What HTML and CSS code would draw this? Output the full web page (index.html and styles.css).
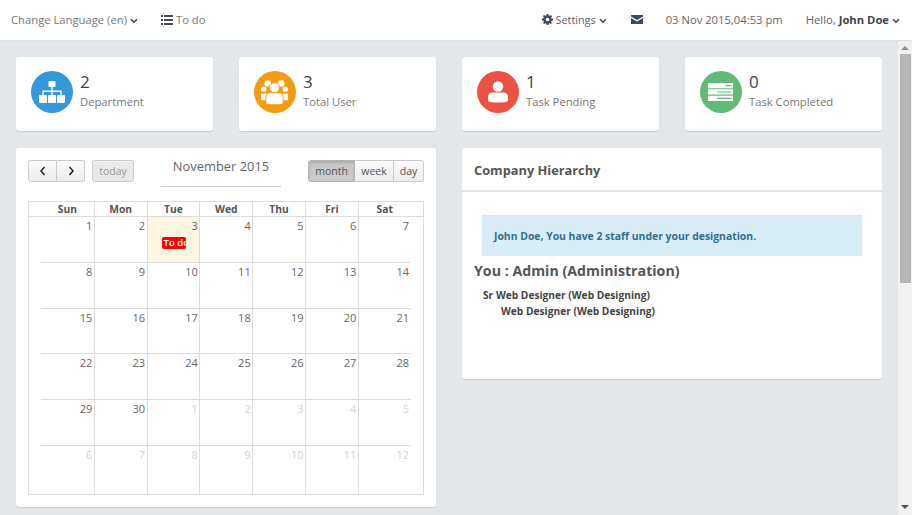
FILE: index.html
```html
<!DOCTYPE html>
<html lang="en">
<head>
  <meta charset="UTF-8">
  <meta name="viewport" content="width=device-width, initial-scale=1.0">
  <title>Dashboard</title>
  <link rel="stylesheet" href="styles.css">
</head>
<body>
  <header class="topo">
    <div class="topo-grupo">
      <a class="topo-item"><span>Change Language (en)</span>
        <svg class="seta" viewBox="0 0 8 6"><path d="M1 1.200l3 3 3-3" /></svg>
      </a>
      <a class="topo-item todo">
        <svg class="ico-lista" viewBox="0 0 12 10"><path d="M0 0h2v2H0zM3 0h9v2H3zM0 4h2v2H0zM3 4h9v2H3zM0 8h2v2H0zM3 8h9v2H3z" /></svg>
        <span>To do</span>
      </a>
    </div>
    <div class="topo-grupo">
      <a class="topo-item escuro ajustes">
        <svg class="ico-gear" viewBox="0 0 12 12"><path fill-rule="evenodd" d="M5 0h2l.3 1.600 1 .4L9.700 1.100l1.300 1.300-1 1.300.5 1.100L12 5v2l-1.500.3-.5 1.100.9 1.300-1.300 1.300-1.300-.9-1 .4L7 12H5l-.3-1.500-1-.4-1.300.9-1.300-1.300.9-1.300-.5-1.100L0 7V5l1.500-.3.5-1.100-1-1.300L2.300 1.100 3.700 2l1-.4zM6 4a2 2 0 100 4 2 2 0 000-4z" /></svg>
        <span>Settings</span>
        <svg class="seta" viewBox="0 0 8 6"><path d="M1 1.200l3 3 3-3" /></svg>
      </a>
      <a class="topo-item mail">
        <svg class="ico-mail" viewBox="0 0 12 9"><path d="M0 0h12v1.600L6 5 0 1.600zM0 3l6 3.400L12 3v6H0z" /></svg>
      </a>
      <span class="topo-item data">03 Nov 2015,04:53 pm</span>
      <a class="topo-item escuro ola"><span>Hello, <b>John Doe</b></span>
        <svg class="seta" viewBox="0 0 8 6"><path d="M1 1.200l3 3 3-3" /></svg>
      </a>
    </div>
  </header>

  <div class="pagina">
    <main class="conteudo">
      <section class="cards">
        <div class="card">
          <span class="circulo azul">
            <svg viewBox="0 0 26 23">
              <rect x="9.500" y="0" width="7" height="6" rx="1" />
              <rect x="12.300" y="6" width="1.400" height="9" />
              <rect x="3.500" y="9.500" width="19" height="1.400" />
              <rect x="3.300" y="10" width="1.400" height="5" />
              <rect x="21.300" y="10" width="1.400" height="5" />
              <rect x="0" y="14" width="8" height="8" rx="1" />
              <rect x="9" y="14" width="8" height="8" rx="1" />
              <rect x="18" y="14" width="8" height="8" rx="1" />
            </svg>
          </span>
          <div class="card-texto"><div class="numero">2</div><div class="rotulo">Department</div></div>
        </div>
        <div class="card">
          <span class="circulo laranja">
            <svg viewBox="0 0 28 26"><circle cx="7" cy="3.600" r="3.400" /><circle cx="21" cy="3.600" r="3.400" /><circle cx="2.800" cy="9.500" r="2.800" /><circle cx="25.200" cy="9.500" r="2.800" /><path d="M0 14h6v7H0zM22 14h6v7h-6z" /><circle class="halo" cx="14" cy="8" r="5.200" /><path class="halo" d="M5 25v-7c0-4 3-5 5-5h8c2 0 5 1 5 5v7c-3 1-15 1-18 0z" /></svg>
          </span>
          <div class="card-texto"><div class="numero">3</div><div class="rotulo">Total User</div></div>
        </div>
        <div class="card">
          <span class="circulo vermelho">
            <svg viewBox="0 0 20 22"><circle cx="10" cy="5.500" r="5.200" /><path d="M0 20v-4c0-3 2-4.500 4.500-4.500h11c2.500 0 4.500 1.500 4.500 4.500v4c-3 2-17 2-20 0z" /></svg>
          </span>
          <div class="card-texto"><div class="numero">1</div><div class="rotulo">Task Pending</div></div>
        </div>
        <div class="card">
          <span class="circulo verde">
            <svg viewBox="0 0 25 18"><path fill-rule="evenodd" d="M0 0h25v5.300H0zM17.500 2v1.200h6V2zM0 6.300h25v5.300H0zM9 8.400v1.200h14.500V8.400zM0 12.700h25V18H0zM9 14.800V16h14.500v-1.200z" /></svg>
          </span>
          <div class="card-texto"><div class="numero">0</div><div class="rotulo">Task Completed</div></div>
        </div>
      </section>

      <section class="colunas">
        <div class="painel calendario">
          <div class="cal-topo">
            <div class="cal-esq">
              <div class="btn-grupo">
                <button class="btn seta-btn"><svg viewBox="0 0 8 10"><path d="M5.500 1L2 5l3.500 4" /></svg></button><button class="btn seta-btn"><svg viewBox="0 0 8 10"><path d="M2.500 1L6 5 2.500 9" /></svg></button>
              </div>
              <button class="btn hoje">today</button>
            </div>
            <h2 class="cal-titulo">November 2015</h2>
            <div class="btn-grupo">
              <button class="btn ativo">month</button><button class="btn semana">week</button><button class="btn dia-btn">day</button>
            </div>
          </div>
          <div class="cal">
            <div class="cal-semana">
              <span>Sun</span><span>Mon</span><span>Tue</span><span>Wed</span><span>Thu</span><span>Fri</span><span>Sat</span>
            </div>
            <div class="cal-linha">
              <div class="dia">1</div><div class="dia">2</div>
              <div class="dia hoje-cel">3<span class="evento">To do</span></div>
              <div class="dia">4</div><div class="dia">5</div><div class="dia">6</div><div class="dia">7</div>
            </div>
            <div class="cal-linha">
              <div class="dia">8</div><div class="dia">9</div><div class="dia">10</div><div class="dia">11</div><div class="dia">12</div><div class="dia">13</div><div class="dia">14</div>
            </div>
            <div class="cal-linha">
              <div class="dia">15</div><div class="dia">16</div><div class="dia">17</div><div class="dia">18</div><div class="dia">19</div><div class="dia">20</div><div class="dia">21</div>
            </div>
            <div class="cal-linha">
              <div class="dia">22</div><div class="dia">23</div><div class="dia">24</div><div class="dia">25</div><div class="dia">26</div><div class="dia">27</div><div class="dia">28</div>
            </div>
            <div class="cal-linha">
              <div class="dia">29</div><div class="dia">30</div><div class="dia fora">1</div><div class="dia fora">2</div><div class="dia fora">3</div><div class="dia fora">4</div><div class="dia fora">5</div>
            </div>
            <div class="cal-linha ultima">
              <div class="dia fora">6</div><div class="dia fora">7</div><div class="dia fora">8</div><div class="dia fora">9</div><div class="dia fora">10</div><div class="dia fora">11</div><div class="dia fora">12</div>
            </div>
          </div>
        </div>

        <div class="painel hierarquia">
          <h3 class="hier-titulo">Company Hierarchy</h3>
          <div class="hier-corpo">
            <div class="aviso">John Doe, You have 2 staff under your designation.</div>
            <h4 class="voce">You : Admin (Administration)</h4>
            <p class="nivel1">Sr Web Designer (Web Designing)</p>
            <p class="nivel2">Web Designer (Web Designing)</p>
          </div>
        </div>
      </section>
    </main>

    <div class="barra">
      <span class="barra-cima"></span>
      <span class="barra-thumb"></span>
      <span class="barra-baixo"></span>
    </div>
  </div>
</body>
</html>
```

FILE: styles.css
```css
* {
  box-sizing: border-box;
}
html, body {
  height: 100%;
}
body {
  margin: 0;
  font-family: "Open Sans", sans-serif;
  font-size: 11.25px;
  color: #555;
  background-color: #e4e7ea;
  overflow: hidden;
}

/* barra do topo */
.topo {
  height: 41px;
  background: white;
  display: flex;
  justify-content: space-between;
  align-items: center;
  padding: 0 12px 1px 11px;
  border-bottom: 1px solid #dfe2e5;
}
.topo-grupo {
  display: flex;
  align-items: center;
}
.topo-item {
  display: flex;
  align-items: center;
  gap: 3px;
  color: #777;
  white-space: nowrap;
}
.todo {
  margin-left: 23px;
}
.escuro {
  color: #5f6270;
}
.escuro b {
  color: #3f4350;
}
.ajustes {
  font-size: 10.8px;
}
.mail {
  margin-left: 24px;
}
.data {
  margin-left: 23px;
  color: #666;
}
.ola {
  margin-left: 23px;
}
.seta {
  width: 8px;
  height: 6px;
  margin-top: 2px;
  fill: none;
  stroke: #3e4452;
  stroke-width: 1.6;
}
.ico-lista {
  width: 12px;
  height: 10px;
  fill: #444c5c;
}
.ico-gear {
  width: 11px;
  height: 11px;
  fill: #444c5c;
}
.ico-mail {
  width: 12px;
  height: 9px;
  fill: #3e4a5c;
}

.pagina {
  display: flex;
  height: calc(100vh - 41px);
}
.conteudo {
  flex: 1;
  overflow: hidden;
  padding: 16px 0 0 16px;
}

/* barra de rolagem desenhada */
.barra {
  width: 14px;
  background: #f1f1f1;
  display: flex;
  flex-direction: column;
  align-items: flex-end;
  padding: 5px 1px 6px 0;
}
.barra-cima, .barra-baixo {
  width: 0;
  height: 0;
  margin-right: 2px;
  border-left: 4px solid transparent;
  border-right: 4px solid transparent;
}
.barra-cima {
  border-bottom: 4px solid #8e8e8e;
}
.barra-baixo {
  margin-top: auto;
  border-top: 4px solid #505050;
}
.barra-thumb {
  width: 11px;
  height: 229px;
  margin-top: 4px;
  background: #b6b6b6;
}

.cards {
  display: grid;
  grid-template-columns: repeat(4, 197.4px);
  column-gap: 25.6px;
}
.card {
  height: 74px;
  background: white;
  border-radius: 3px;
  box-shadow: 0 1px 1px rgba(0,0,0,0.1);
  display: flex;
  align-items: center;
  gap: 7px;
  padding: 0 15px 4px 15px;
}
.card-texto {
  margin-bottom: 2px;
}
.circulo {
  width: 42px;
  height: 42px;
  border-radius: 50%;
  display: flex;
  align-items: center;
  justify-content: center;
  flex-shrink: 0;
}
.circulo svg {
  fill: white;
  width: 26px;
  height: 23px;
}
.azul { background-color: #3498db; }
.laranja { background-color: #f39c12; }
.vermelho { background-color: #ec5244; }
.verde { background-color: #62bb75; }
.laranja svg { width: 27px; height: 25px; }
.vermelho svg { width: 20px; height: 22px; }
.verde svg { width: 25px; height: 18px; }
.halo {
  stroke: #f39c12;
  stroke-width: 1;
}
.numero {
  font-size: 17px;
  line-height: 22px;
  color: #3b4150;
}
.rotulo {
  font-size: 11.25px;
  line-height: 18px;
  color: #777;
}

.colunas {
  display: grid;
  grid-template-columns: 420px 420px;
  column-gap: 26px;
  align-items: start;
  margin-top: 17px;
}
.painel {
  background: white;
  border-radius: 3px;
  box-shadow: 0 1px 1px rgba(0,0,0,0.1);
}

/* calendario */
.calendario {
  padding: 12px;
  height: 359px;
}
.cal-topo {
  display: flex;
  justify-content: space-between;
  align-items: flex-start;
  height: 41px;
}
.cal-esq {
  display: flex;
  gap: 7px;
}
.btn-grupo {
  display: flex;
}
.btn {
  height: 22px;
  padding: 0;
  font-family: inherit;
  font-size: 10.5px;
  line-height: 20px;
  color: #555;
  background: linear-gradient(#fbfbfb, #ececec);
  border: 1px solid #ccc;
  border-left-width: 0;
  box-shadow: inset 0 1px 0 rgba(255,255,255,0.4);
}
.btn-grupo .btn:first-child {
  border-left-width: 1px;
  border-radius: 3px 0 0 3px;
}
.btn-grupo .btn:last-child {
  border-radius: 0 3px 3px 0;
}
.seta-btn {
  width: 28px;
  display: flex;
  align-items: center;
  justify-content: center;
}
.btn-grupo .seta-btn:first-child {
  width: 29px;
}
.seta-btn svg {
  width: 8px;
  height: 10px;
  fill: none;
  stroke: #222;
  stroke-width: 1.5;
}
.hoje {
  width: 42px;
  color: #9a9a9a;
  background: #e9e9e9;
  border-left-width: 1px;
  border-radius: 3px;
}
.ativo {
  width: 47px;
  background: #c9c9c9;
  box-shadow: inset 0 2px 3px rgba(0,0,0,0.15);
  border-color: #b3b3b3;
}
.semana {
  width: 39px;
}
.dia-btn {
  width: 30px;
}
.cal-titulo {
  margin: 0;
  width: 120px;
  height: 27px;
  font-size: 12.9px;
  font-weight: 400;
  line-height: 13px;
  text-align: center;
  color: #666;
  border-bottom: 1px solid #ccc;
  white-space: nowrap;
}
.cal {
  border: 1px solid #ddd;
  height: 294px;
}
.cal-semana {
  display: grid;
  grid-template-columns: repeat(7, 52.8px);
  height: 15px;
  padding: 0 12px;
  border-bottom: 1px solid #ddd;
  font-size: 10.3px;
  line-height: 15px;
  font-weight: 700;
  text-align: center;
  color: #555;
}
.cal-semana span + span {
  border-left: 1px solid #ddd;
}
/* a linha horizontal nao vai ate as bordas */
.cal-linha {
  display: grid;
  grid-template-columns: repeat(7, 52.8px);
  height: 45.8px;
  margin: 0 12px;
  border-bottom: 1px solid #ddd;
}
.ultima {
  height: 48px;
  border-bottom: none;
}
.dia {
  font-size: 11px;
  line-height: 16px;
  padding: 1px 1.5px 0 0;
  text-align: right;
  color: #666;
}
.dia + .dia {
  border-left: 1px solid #ddd;
}
.hoje-cel {
  background: #fcf6e2;
}
.fora {
  color: #d4d4d4;
}
.evento {
  display: block;
  width: 24px;
  height: 12px;
  margin: 3px 0 0 14px;
  padding-left: 2px;
  overflow: hidden;
  font-size: 9.5px;
  font-weight: 600;
  line-height: 12px;
  text-align: left;
  white-space: nowrap;
  color: white;
  background: red;
  border-radius: 2px;
}

/* hierarquia */
.hierarquia {
  height: 231px;
}
.hier-titulo {
  margin: 0;
  height: 44px;
  padding: 0 12px;
  font-size: 12.8px;
  font-weight: 700;
  line-height: 45px;
  color: #555;
  border-bottom: 2px solid #e2e2e2;
}
.hier-corpo {
  padding: 23px 12px 0 12px;
}
.aviso {
  margin: 0 8px;
  height: 41px;
  padding: 0 11px;
  font-size: 10.4px;
  font-weight: 700;
  line-height: 41px;
  color: #31708f;
  background: #d9edf7;
  border: 1px solid #d3ebf5;
}
.voce {
  margin: 5px 0 0 0;
  font-size: 14.2px;
  font-weight: 700;
  line-height: 20px;
  color: #555;
}
.nivel1, .nivel2 {
  margin: 0;
  font-size: 10.2px;
  font-weight: 700;
  line-height: 16px;
  color: #444;
}
.nivel1 {
  margin-top: 6px;
  padding-left: 9px;
}
.nivel2 {
  padding-left: 27px;
}
```
